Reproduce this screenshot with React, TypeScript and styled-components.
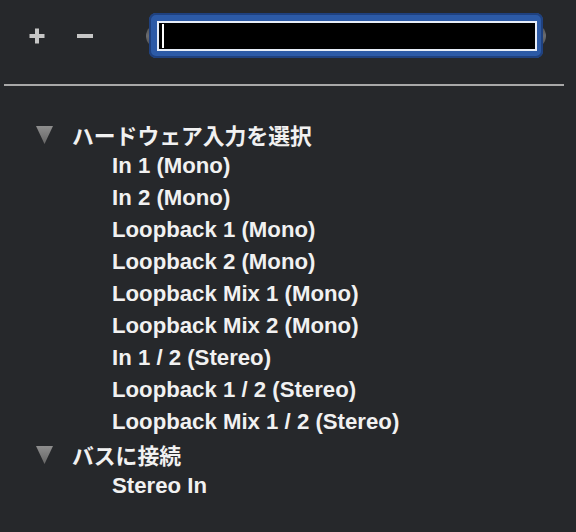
import React from "react";
import styled, { createGlobalStyle } from "styled-components";

const Global = createGlobalStyle`
  html, body { margin: 0; padding: 0; background: #26282b; }
  body { font-family: "Liberation Sans", "Noto Sans CJK JP", sans-serif; }
`;

const Panel = styled.div`
  width: 576px;
  height: 532px;
  background: #26282b;
  overflow: hidden;
`;

const Toolbar = styled.div`
  display: flex;
  align-items: center;
  height: 71px;
  padding-left: 28px;
`;

const ToolButton = styled.button<{ $gap: number }>`
  display: flex;
  align-items: center;
  justify-content: center;
  width: 18px;
  height: 18px;
  padding: 0;
  margin-right: ${(p) => p.$gap}px;
  border: none;
  background: transparent;
  color: #c6c6c6;
`;

const Pill = styled.div`
  display: flex;
  align-items: center;
  width: 400px;
  height: 24px;
  padding: 0 3px;
  box-sizing: border-box;
  border-radius: 12px;
  background: linear-gradient(#4a4b4e, #6b6c6f 50%, #4a4b4e);
`;

const FocusRing = styled.div`
  flex: 1;
  height: 45px;
  box-sizing: border-box;
  padding: 8px 6px 7px 8px;
  border-radius: 7px;
  background: #2c5aa6;
  box-shadow: inset 0 0 0 2px #1f417f;
`;

const Field = styled.div`
  display: flex;
  align-items: center;
  height: 30px;
  box-sizing: border-box;
  border: 2px solid #e6edf8;
  background: #000;
  padding-left: 3px;
`;

const Caret = styled.span`
  width: 2px;
  height: 24px;
  background: #ffffff;
`;

const Divider = styled.hr`
  margin: 13px 0 0 4px;
  width: 560px;
  height: 2px;
  border: none;
  background: #a8a8a8;
`;

const Tree = styled.ul`
  list-style: none;
  margin: 0;
  padding: 32px 0 0 0;
`;

const Row = styled.li<{ $indent: number }>`
  display: flex;
  align-items: center;
  height: 32px;
  padding-left: ${(p) => p.$indent}px;
  color: #f1f1f1;
  font-weight: bold;
  font-size: 22.2px;
  white-space: nowrap;
`;

const GroupLabel = styled.span`
  font-family: "Liberation Sans", "Noto Sans CJK JP", sans-serif;
  font-size: 21.8px;
  font-weight: bold;
  margin-left: 18px;
`;

const Disclosure = () => (
  <svg width="19" height="19" viewBox="0 0 19 19">
    <defs>
      <linearGradient id="tri" x1="0" y1="0" x2="0" y2="1">
        <stop offset="0" stopColor="#8e8e8e" />
        <stop offset="1" stopColor="#666666" />
      </linearGradient>
    </defs>
    <polygon points="1,1 18,1 9.5,19" fill="url(#tri)" />
  </svg>
);

const PlusIcon = () => (
  <svg width="18" height="18" viewBox="0 0 18 18">
    <path d="M9 1.5v15M1.5 9h15" stroke="currentColor" strokeWidth="4" />
  </svg>
);

const MinusIcon = () => (
  <svg width="18" height="18" viewBox="0 0 18 18">
    <path d="M1 9h16" stroke="currentColor" strokeWidth="4" />
  </svg>
);

const groups = [
  {
    title: "ハードウェア入力を選択",
    items: [
      "In 1 (Mono)",
      "In 2 (Mono)",
      "Loopback 1 (Mono)",
      "Loopback 2 (Mono)",
      "Loopback Mix 1 (Mono)",
      "Loopback Mix 2 (Mono)",
      "In 1 / 2 (Stereo)",
      "Loopback 1 / 2 (Stereo)",
      "Loopback Mix 1 / 2 (Stereo)",
    ],
  },
  { title: "バスに接続", items: ["Stereo In"] },
];

export default function App() {
  return (
    <Panel>
      <Global />
      <Toolbar>
        <ToolButton $gap={30} aria-label="add">
          <PlusIcon />
        </ToolButton>
        <ToolButton $gap={52} aria-label="remove">
          <MinusIcon />
        </ToolButton>
        <Pill>
          <FocusRing>
            <Field>
              <Caret />
            </Field>
          </FocusRing>
        </Pill>
      </Toolbar>
      <Divider />
      <Tree>
        {groups.map((g) => (
          <React.Fragment key={g.title}>
            <Row $indent={35}>
              <Disclosure />
              <GroupLabel>{g.title}</GroupLabel>
            </Row>
            {g.items.map((it) => (
              <Row key={it} $indent={112}>
                {it}
              </Row>
            ))}
          </React.Fragment>
        ))}
      </Tree>
    </Panel>
  );
}
